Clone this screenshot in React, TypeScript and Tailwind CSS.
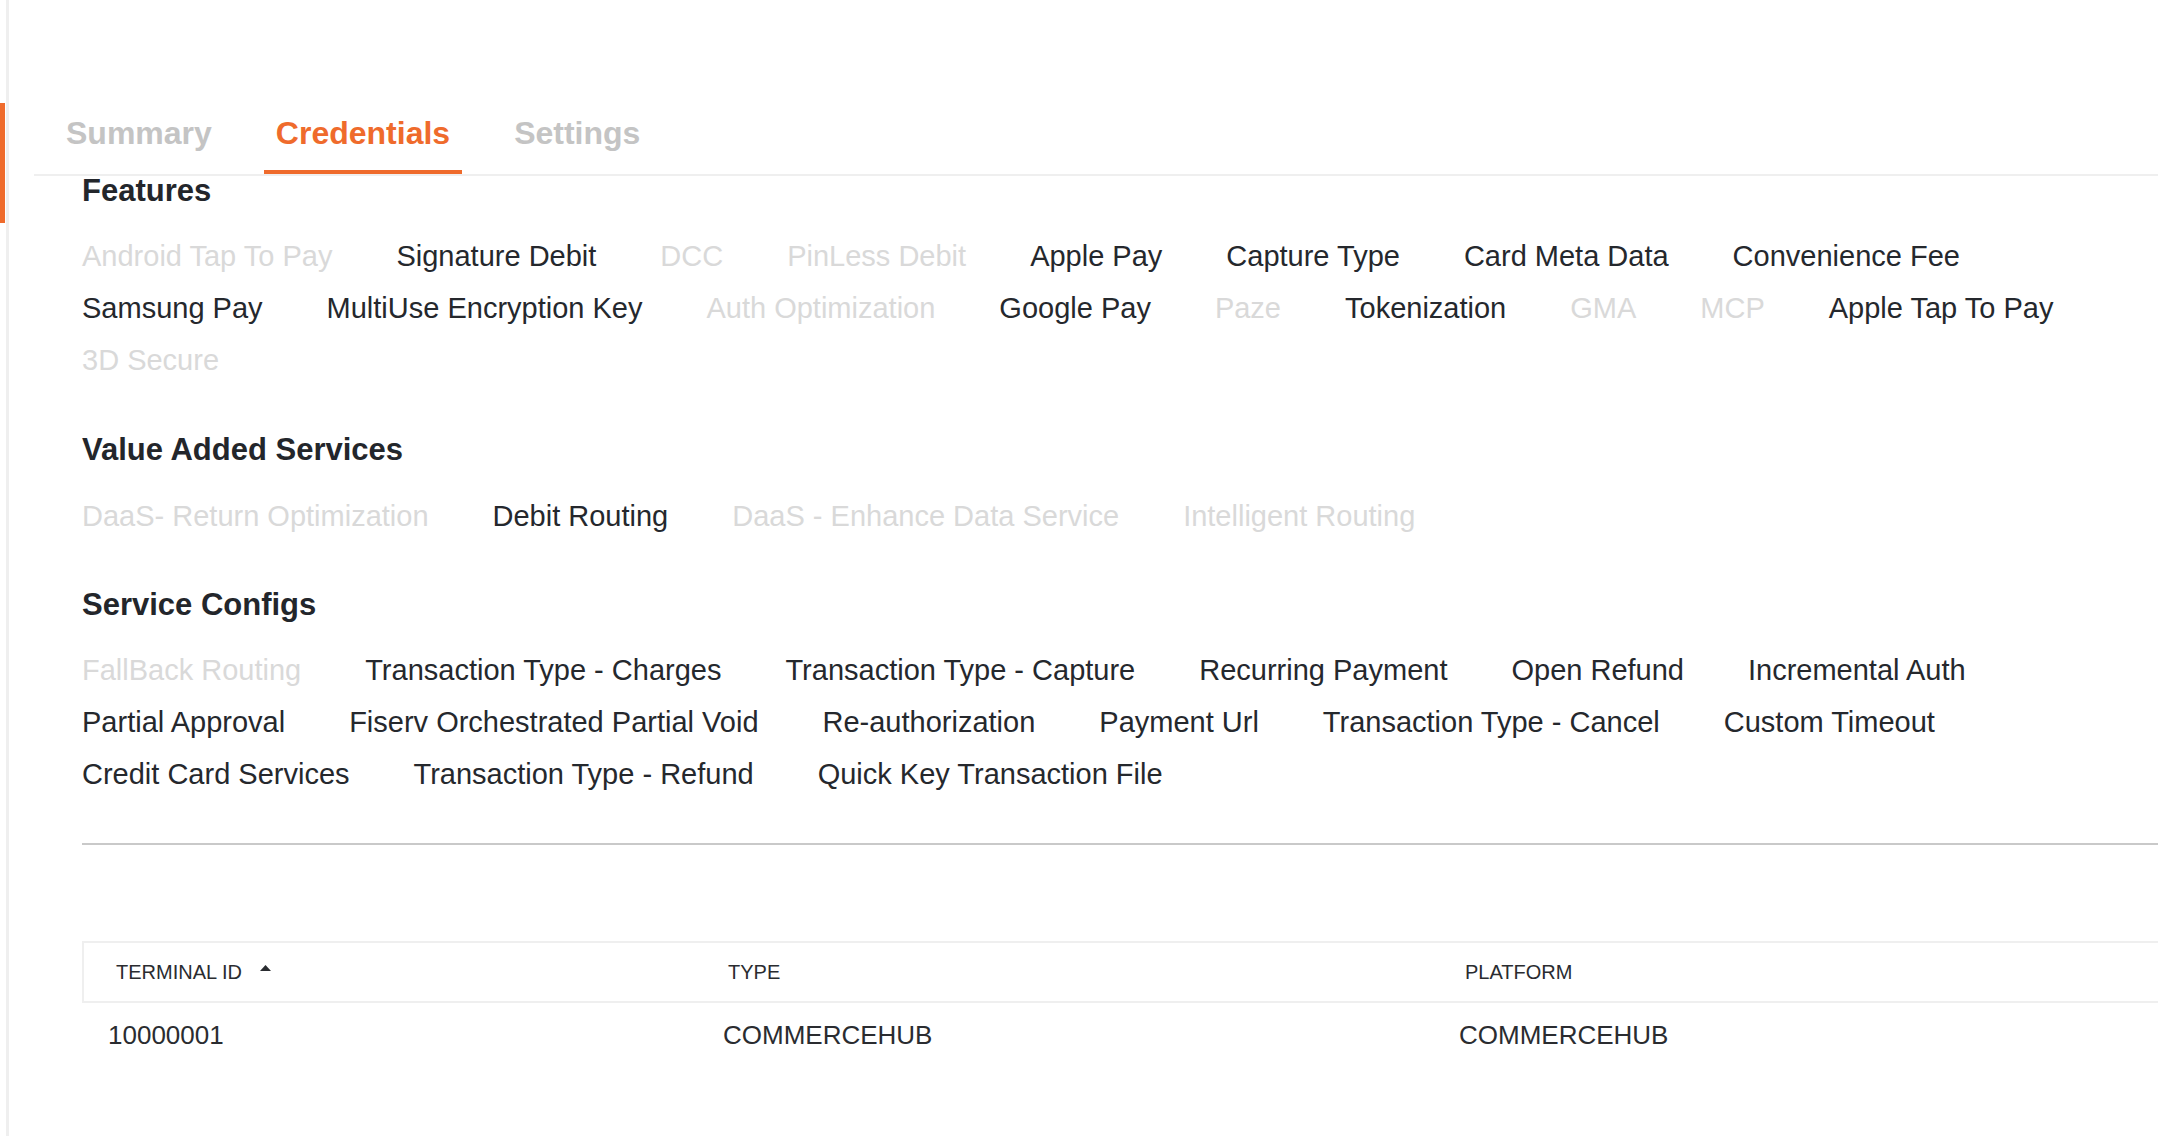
import { useState } from 'react';

type Item = { label: string; on: boolean };

const features: Item[] = [
  { label: 'Android Tap To Pay', on: false },
  { label: 'Signature Debit', on: true },
  { label: 'DCC', on: false },
  { label: 'PinLess Debit', on: false },
  { label: 'Apple Pay', on: true },
  { label: 'Capture Type', on: true },
  { label: 'Card Meta Data', on: true },
  { label: 'Convenience Fee', on: true },
  { label: 'Samsung Pay', on: true },
  { label: 'MultiUse Encryption Key', on: true },
  { label: 'Auth Optimization', on: false },
  { label: 'Google Pay', on: true },
  { label: 'Paze', on: false },
  { label: 'Tokenization', on: true },
  { label: 'GMA', on: false },
  { label: 'MCP', on: false },
  { label: 'Apple Tap To Pay', on: true },
  { label: '3D Secure', on: false },
];

const valueAdded: Item[] = [
  { label: 'DaaS- Return Optimization', on: false },
  { label: 'Debit Routing', on: true },
  { label: 'DaaS - Enhance Data Service', on: false },
  { label: 'Intelligent Routing', on: false },
];

const serviceConfigs: Item[] = [
  { label: 'FallBack Routing', on: false },
  { label: 'Transaction Type - Charges', on: true },
  { label: 'Transaction Type - Capture', on: true },
  { label: 'Recurring Payment', on: true },
  { label: 'Open Refund', on: true },
  { label: 'Incremental Auth', on: true },
  { label: 'Partial Approval', on: true },
  { label: 'Fiserv Orchestrated Partial Void', on: true },
  { label: 'Re-authorization', on: true },
  { label: 'Payment Url', on: true },
  { label: 'Transaction Type - Cancel', on: true },
  { label: 'Custom Timeout', on: true },
  { label: 'Credit Card Services', on: true },
  { label: 'Transaction Type - Refund', on: true },
  { label: 'Quick Key Transaction File', on: true },
];

const ItemList = ({ items }: { items: Item[] }) => (
  <div className="flex flex-wrap gap-x-16 pr-[48px] text-[29px] leading-[52px]">
    {items.map((item) => (
      <span key={item.label} className={item.on ? 'text-[#25282d]' : 'text-[#d9d9d9]'}>
        {item.label}
      </span>
    ))}
  </div>
);

const SectionTitle = ({ children, className = '' }: { children: React.ReactNode; className?: string }) => (
  <h2 className={`text-[31px] leading-[30px] font-bold text-[#23262b] ${className}`}>{children}</h2>
);

export default function App() {
  const [tab, setTab] = useState('Credentials');
  const tabs = ['Summary', 'Credentials', 'Settings'];

  return (
    <div className="flex min-h-screen w-full overflow-hidden bg-white font-['Liberation_Sans',Arial,sans-serif]">
      {/* left rail */}
      <div className="w-[6px] shrink-0">
        <div className="mt-[103px] h-[120px] w-[5px] bg-[#ef6b2c]"></div>
      </div>

      <div className="flex-1 min-w-0 border-l-[3px] border-[#efefef]">
        {/* Tabs */}
        <nav className="ml-[25px] pt-[113px] pl-[20px] flex gap-10 border-b-2 border-[#efefef]">
          {tabs.map((t) => (
            <button
              key={t}
              onClick={() => setTab(t)}
              className={`px-3 pb-[17px] text-[32px] leading-[40px] font-bold border-b-4 ${
                tab === t ? 'text-[#ef6b2c] border-[#ef6b2c]' : 'text-[#c4c4c4] border-transparent'
              }`}
            >
              {t}
            </button>
          ))}
        </nav>

        <div className="pl-[73px]">
          <SectionTitle>Features</SectionTitle>
          <div className="mt-[24px]">
            <ItemList items={features} />
          </div>

          <SectionTitle className="mt-[49px]">Value Added Services</SectionTitle>
          <div className="mt-[25px]">
            <ItemList items={valueAdded} />
          </div>

          <SectionTitle className="mt-[48px]">Service Configs</SectionTitle>
          <div className="mt-[24px]">
            <ItemList items={serviceConfigs} />
          </div>

          <div className="mt-[43px] h-[2px] bg-[#c9c9c9]"></div>

          {/* Terminals table */}
          <div className="mt-[96px] text-[#2a2c30]">
            <div className="grid grid-cols-[613px_736px_1fr] h-[62px] items-center border-y-2 border-l-2 border-[#efefef] text-[20px]">
              <div className="pl-[32px] flex items-center">
                <span>TERMINAL ID</span>
                <svg width="11" height="6" viewBox="0 0 11 6" className="ml-[18px] mb-[9px]">
                  <path d="M0 6 L5.5 0 L11 6 Z" fill="#2a2c30" />
                </svg>
              </div>
              <div className="pl-[31px]">TYPE</div>
              <div className="pl-[32px]">PLATFORM</div>
            </div>
            <div className="grid grid-cols-[615px_736px_1fr] h-[64px] items-center text-[26px]">
              <div className="pl-[26px]">10000001</div>
              <div className="pl-[26px]">COMMERCEHUB</div>
              <div className="pl-[26px]">COMMERCEHUB</div>
            </div>
          </div>
        </div>
      </div>
    </div>
  );
}
